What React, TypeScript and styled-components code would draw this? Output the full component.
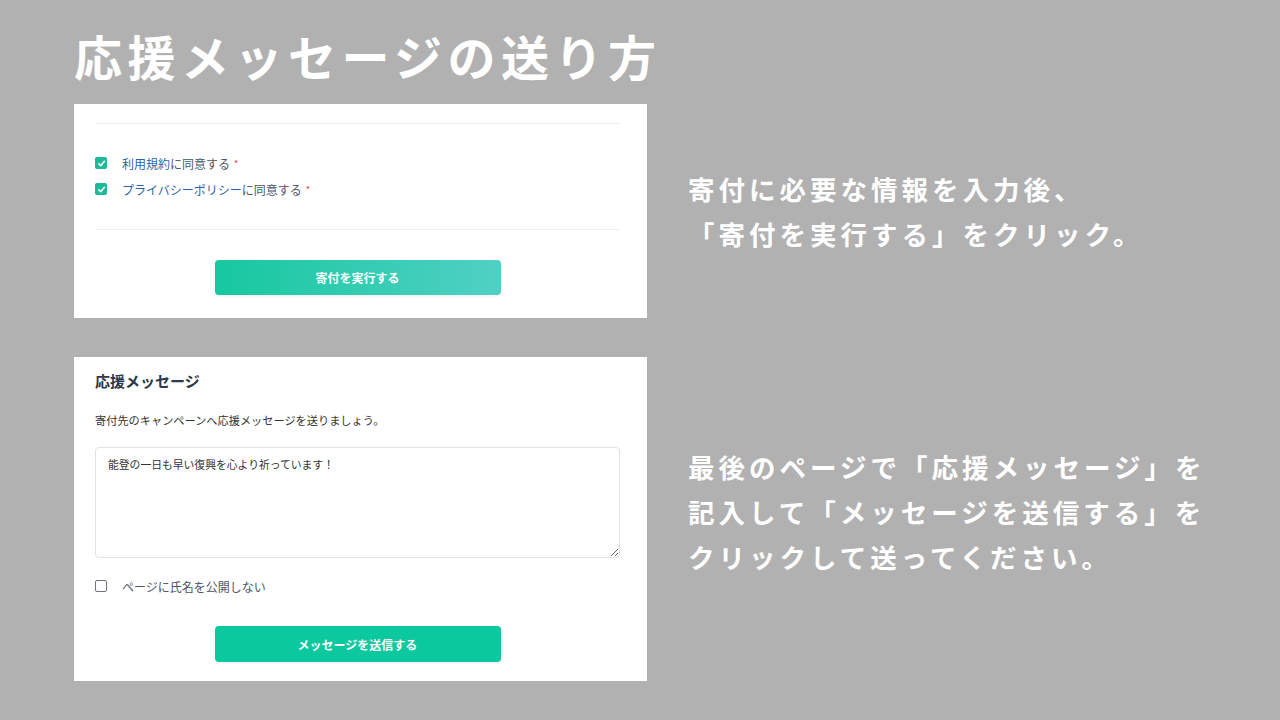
import React from "react";
import styled, { createGlobalStyle } from "styled-components";

const GlobalStyle = createGlobalStyle`
  html, body {
    margin: 0;
    padding: 0;
    background: #b1b1b1;
    font-family: "Noto Sans CJK JP", "Noto Sans", sans-serif;
  }
`;

const Page = styled.div`
  width: 1280px;
  height: 720px;
  box-sizing: border-box;
  padding: 25px 0 0 74px;
  overflow: hidden;
`;

const Title = styled.h1`
  margin: 0 0 19px;
  font-size: 48px;
  line-height: 60px;
  font-weight: 700;
  letter-spacing: 5.5px;
  color: #ffffff;
`;

const Step = styled.section<{ $gap?: number }>`
  display: grid;
  grid-template-columns: 573px 1fr;
  column-gap: 41px;
  align-items: center;
  margin-bottom: ${(p) => p.$gap ?? 0}px;
`;

const Card = styled.div<{ $top: number; $bottom: number }>`
  background: #ffffff;
  padding: ${(p) => p.$top}px 27px ${(p) => p.$bottom}px 21px;
  display: flex;
  flex-direction: column;
`;

const Caption = styled.p<{ $shift?: number }>`
  margin: ${(p) => p.$shift ?? 0}px 0 0;
  color: #ffffff;
  font-size: 26.5px;
  line-height: 45px;
  font-weight: 700;
  letter-spacing: 4px;
  white-space: pre-line;
`;

const Divider = styled.hr<{ $after: number }>`
  margin: 0 0 ${(p) => p.$after}px;
  border: 0;
  border-top: 1px solid #eeeeee;
`;

const CheckList = styled.div`
  display: flex;
  flex-direction: column;
  gap: 8px;
  margin-bottom: 31px;
`;

const CheckRow = styled.label`
  display: flex;
  align-items: center;
  gap: 15px;
  height: 18px;
  font-size: 12px;
  color: #4a5568;
`;

const Box = styled.span<{ $checked?: boolean }>`
  flex: none;
  width: 12px;
  height: 12px;
  box-sizing: border-box;
  border-radius: 2px;
  display: flex;
  align-items: center;
  justify-content: center;
  background: ${(p) => (p.$checked ? "#1cba99" : "#ffffff")};
  border: ${(p) => (p.$checked ? "none" : "1.5px solid #6b7280")};
`;

const Link = styled.span`
  color: #2c63a6;
`;

const Required = styled.span`
  color: #e53e3e;
  font-size: 9px;
  margin-left: 4px;
  vertical-align: 2px;
`;

const Button = styled.button<{ $gradient?: boolean; $h: number }>`
  align-self: center;
  width: 286px;
  height: ${(p) => p.$h}px;
  border: 0;
  border-radius: 4px;
  background: ${(p) =>
    p.$gradient ? "linear-gradient(90deg, #17c8a0, #50d0c4)" : "#0cc89f"};
  color: #ffffff;
  font-family: inherit;
  font-size: 12px;
  font-weight: 700;
  box-shadow: 0 1px 3px rgba(0, 0, 0, 0.08);
`;

const SectionTitle = styled.h2`
  margin: 0 0 20px;
  font-size: 15px;
  line-height: 22px;
  font-weight: 700;
  color: #2d3748;
`;

const Lead = styled.p`
  margin: 0 0 19px;
  font-size: 11.2px;
  line-height: 16px;
  color: #333333;
`;

const MessageBox = styled.textarea`
  display: block;
  box-sizing: border-box;
  width: 100%;
  height: 111px;
  margin: 0 0 19px;
  padding: 7px 12px;
  border: 1px solid #e2e2e2;
  border-radius: 4px;
  resize: vertical;
  font-family: inherit;
  font-size: 10.8px;
  line-height: 18px;
  color: #333333;
  outline: none;
`;

function Check() {
  return (
    <svg width="9" height="9" viewBox="0 0 10 10" fill="none">
      <path d="M2 5.3 4.1 7.4 8.2 2.6" stroke="#fff" strokeWidth="1.8" strokeLinecap="round" strokeLinejoin="round" />
    </svg>
  );
}

export default function App() {
  return (
    <>
      <GlobalStyle />
      <Page>
        <Title>応援メッセージの送り方</Title>

        <Step $gap={39}>
          <Card $top={19} $bottom={23}>
            <Divider $after={30} />
            <CheckList>
              <CheckRow>
                <Box $checked>
                  <Check />
                </Box>
                <span>
                  <Link>利用規約</Link>に同意する<Required>*</Required>
                </span>
              </CheckRow>
              <CheckRow>
                <Box $checked>
                  <Check />
                </Box>
                <span>
                  <Link>プライバシーポリシー</Link>に同意する<Required>*</Required>
                </span>
              </CheckRow>
            </CheckList>
            <Divider $after={30} />
            <Button $gradient $h={35}>寄付を実行する</Button>
          </Card>
          <Caption>{"寄付に必要な情報を入力後、\n「寄付を実行する」をクリック。"}</Caption>
        </Step>

        <Step>
          <Card $top={13} $bottom={19}>
            <SectionTitle>応援メッセージ</SectionTitle>
            <Lead>寄付先のキャンペーンへ応援メッセージを送りましょう。</Lead>
            <MessageBox defaultValue="能登の一日も早い復興を心より祈っています！" />
            <CheckRow style={{ marginBottom: 31 }}>
              <Box />
              <span>ページに氏名を公開しない</span>
            </CheckRow>
            <Button $h={36}>メッセージを送信する</Button>
          </Card>
          <Caption $shift={-16}>
            {"最後のページで「応援メッセージ」を\n記入して「メッセージを送信する」を\nクリックして送ってください。"}
          </Caption>
        </Step>
      </Page>
    </>
  );
}
